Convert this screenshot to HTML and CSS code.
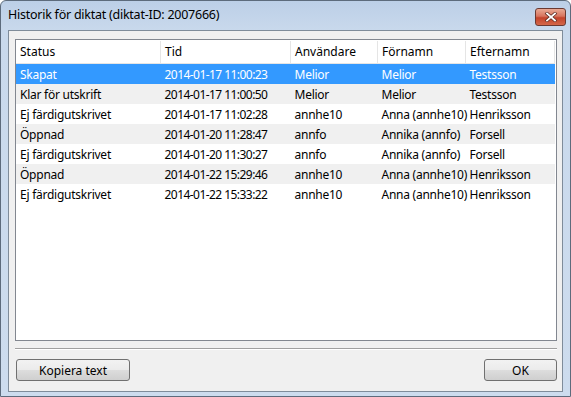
FILE: index.html
```html
<!DOCTYPE html>
<html lang="sv">

<head>
    <meta charset="utf-8">
    <title>Historik för diktat</title>
    <link rel="stylesheet" href="styles.css">
</head>

<body>
    <div class="fonster">
        <div class="titelrad">
            <span class="titel">Historik för diktat (diktat-ID: 2007666)</span>
            <div class="stang">
                <svg width="14" height="10" viewBox="0 0 14 10">
                    <path d="M3 1.5 L11 8.5 M11 1.5 L3 8.5" stroke="#5a2a20" stroke-width="3.2" stroke-linecap="square" />
                    <path d="M3 1.5 L11 8.5 M11 1.5 L3 8.5" stroke="#fff" stroke-width="1.8" stroke-linecap="square" />
                </svg>
            </div>
        </div>
        <div class="klient">
            <div class="lista">
                <table>
                    <thead>
                        <tr>
                            <th class="c1">Status</th>
                            <th class="c2">Tid</th>
                            <th class="c3">Användare</th>
                            <th class="c4">Förnamn</th>
                            <th class="c5">Efternamn</th>
                        </tr>
                    </thead>
                    <tbody>
                        <tr class="vald">
                            <td>Skapat</td>
                            <td class="tid">2014-01-17 11:00:23</td>
                            <td>Melior</td>
                            <td>Melior</td>
                            <td>Testsson</td>
                        </tr>
                        <tr>
                            <td>Klar för utskrift</td>
                            <td class="tid">2014-01-17 11:00:50</td>
                            <td>Melior</td>
                            <td>Melior</td>
                            <td>Testsson</td>
                        </tr>
                        <tr>
                            <td>Ej färdigutskrivet</td>
                            <td class="tid">2014-01-17 11:02:28</td>
                            <td>annhe10</td>
                            <td>Anna (annhe10)</td>
                            <td>Henriksson</td>
                        </tr>
                        <tr>
                            <td>Öppnad</td>
                            <td class="tid">2014-01-20 11:28:47</td>
                            <td>annfo</td>
                            <td>Annika (annfo)</td>
                            <td>Forsell</td>
                        </tr>
                        <tr>
                            <td>Ej färdigutskrivet</td>
                            <td class="tid">2014-01-20 11:30:27</td>
                            <td>annfo</td>
                            <td>Annika (annfo)</td>
                            <td>Forsell</td>
                        </tr>
                        <tr>
                            <td>Öppnad</td>
                            <td class="tid">2014-01-22 15:29:46</td>
                            <td>annhe10</td>
                            <td>Anna (annhe10)</td>
                            <td>Henriksson</td>
                        </tr>
                        <tr>
                            <td>Ej färdigutskrivet</td>
                            <td class="tid">2014-01-22 15:33:22</td>
                            <td>annhe10</td>
                            <td>Anna (annhe10)</td>
                            <td>Henriksson</td>
                        </tr>
                    </tbody>
                </table>
            </div>
            <div class="skiljelinje"></div>
            <div class="knappar">
                <button class="knapp kopiera">Kopiera text</button>
                <button class="knapp ok">OK</button>
            </div>
        </div>
    </div>
</body>

</html>
```
FILE: styles.css
```css
body {
    margin: 0;
    background-color: #ffffff;
    font-family: "Noto Sans", "Open Sans", sans-serif;
    font-size: 12px;
    color: #000000;
}

.fonster {
    width: 571px;
    height: 397px;
    box-sizing: border-box;
    border: 1px solid #5d6b7c;
    border-radius: 6px 6px 0 0;
    background: linear-gradient(#bccfe7, #c9d9ec 30px, #cddcee);
    padding: 0 7px 4px;
    display: flex;
    flex-direction: column;
}

.titelrad {
    height: 29px;
    display: flex;
    align-items: center;
    justify-content: space-between;
}

.titel {
    font-size: 12.5px;
    letter-spacing: -0.25px;
    color: #000000;
    margin-top: -2px;
}

.stang {
    width: 31px;
    height: 18px;
    margin-top: 2px;
    margin-right: -3px;
    box-sizing: border-box;
    border: 1px solid #6b3a32;
    border-radius: 3px;
    background: linear-gradient(#e9a994, #d7745e 45%, #c3432b 55%, #d4684a);
    display: flex;
    align-items: center;
    justify-content: center;
}

.klient {
    flex: 1;
    background-color: #f0f0f0;
    border: 1px solid #7f8c9a;
    padding: 8px 5px 0 6px;
    display: flex;
    flex-direction: column;
}

.lista {
    height: 302px;
    box-sizing: border-box;
    border: 1px solid #828790;
    background-color: #ffffff;
    padding: 1px 1px 0 0;
}

table {
    border-collapse: collapse;
    table-layout: fixed;
    width: 539px;
}

th {
    height: 21px;
    padding: 0 0 1px 4px;
    font-weight: normal;
    text-align: left;
    border-right: 1px solid #e5e5e5;
    border-bottom: 1px solid #e5e5e5;
}

.c1 {
    width: 140px;
}

.c2 {
    width: 125px;
}

.c3 {
    width: 82px;
}

.c4 {
    width: 83px;
}

td {
    height: 20px;
    padding: 0 0 0 4px;
    white-space: nowrap;
    overflow: visible;
    letter-spacing: -0.25px;
}

td.tid {
    letter-spacing: -0.55px;
}

tbody tr:nth-child(even) {
    background-color: #f0f0f0;
}

tr.vald {
    background-color: #3399ff;
    color: #ffffff;
}

.skiljelinje {
    margin-top: 7px;
    height: 0;
    border-top: 1px solid #a0a0a0;
    border-bottom: 1px solid #ffffff;
}

.knappar {
    display: flex;
    justify-content: space-between;
    margin-top: 9px;
    padding: 0 0 0 1px;
}

.knapp {
    height: 22px;
    box-sizing: border-box;
    border: 1px solid #707070;
    border-radius: 3px;
    background: linear-gradient(#f2f2f2, #ebebeb 50%, #dddddd 50%, #cfcfcf);
    font-family: "Noto Sans", "Open Sans", sans-serif;
    font-size: 12px;
    color: #000000;
    padding: 0;
}

.kopiera {
    width: 114px;
}

.ok {
    width: 73px;
}
```
